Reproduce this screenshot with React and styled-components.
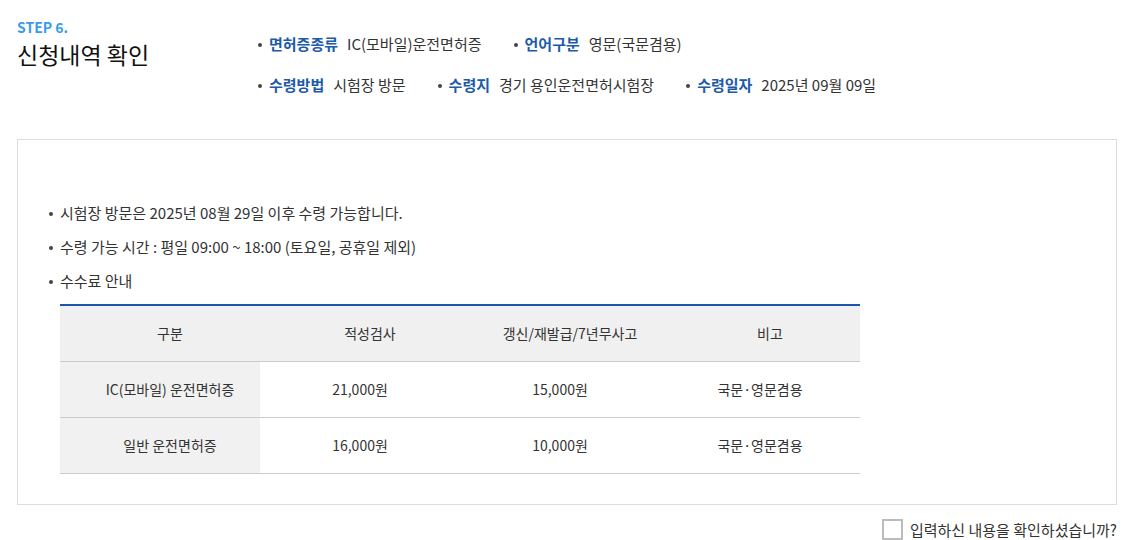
import React from "react";
import styled, { createGlobalStyle } from "styled-components";

const GlobalStyle = createGlobalStyle`
	html, body {
		margin: 0;
		padding: 0;
		background: #fff;
	}
	body {
		font-family: "Noto Sans CJK KR", "Noto Sans", sans-serif;
		color: #333;
	}
	* {
		box-sizing: border-box;
	}
`;

const summary = [
	[
		{ label: "면허증종류", value: "IC(모바일)운전면허증" },
		{ label: "언어구분", value: "영문(국문겸용)" },
	],
	[
		{ label: "수령방법", value: "시험장 방문" },
		{ label: "수령지", value: "경기 용인운전면허시험장" },
		{ label: "수령일자", value: "2025년 09월 09일" },
	],
];

const notices = [
	"시험장 방문은 2025년 08월 29일 이후 수령 가능합니다.",
	"수령 가능 시간 : 평일 09:00 ~ 18:00 (토요일, 공휴일 제외)",
	"수수료 안내",
];

const fees = [
	["IC(모바일) 운전면허증", "21,000원", "15,000원", "국문·영문겸용"],
	["일반 운전면허증", "16,000원", "10,000원", "국문·영문겸용"],
];

const App = () => {
	return (
		<>
			<GlobalStyle />
			<Page>
				<Header>
					<TitleBlock>
						<Step>STEP 6.</Step>
						<Title>신청내역 확인</Title>
					</TitleBlock>
					<Summary>
						{summary.map((row, i) => (
							<SummaryRow key={i}>
								{row.map(item => (
									<SummaryItem key={item.label}>
										<Label>{item.label}</Label>
										<Value>{item.value}</Value>
									</SummaryItem>
								))}
							</SummaryRow>
						))}
					</Summary>
				</Header>

				<Box>
					<NoticeList>
						{notices.map(text => (
							<Notice key={text}>{text}</Notice>
						))}
					</NoticeList>
					<FeeTable>
						<thead>
							<tr>
								<Th>구분</Th>
								<Th>적성검사</Th>
								<Th>갱신/재발급/7년무사고</Th>
								<Th>비고</Th>
							</tr>
						</thead>
						<tbody>
							{fees.map(row => (
								<tr key={row[0]}>
									<RowHead>{row[0]}</RowHead>
									<Td>{row[1]}</Td>
									<Td>{row[2]}</Td>
									<Td>{row[3]}</Td>
								</tr>
							))}
						</tbody>
					</FeeTable>
				</Box>

				<Confirm>
					<CheckBox type='checkbox' id='confirm' />
					<ConfirmLabel htmlFor='confirm'>입력하신 내용을 확인하셨습니까?</ConfirmLabel>
				</Confirm>
			</Page>
		</>
	);
};

export default App;

const Page = styled.div`
	width: 1122px;
	padding: 16px 5px 0 17px;
`;

const Header = styled.div`
	display: flex;
	height: 123px;
`;

const TitleBlock = styled.div`
	width: 241px;
`;

const Step = styled.div`
	font-size: 14px;
	font-weight: 700;
	color: #3a9be9;
	line-height: 22px;
`;

const Title = styled.h2`
	margin: 0;
	font-size: 23px;
	font-weight: 400;
	color: #111;
	line-height: 32px;
`;

const Summary = styled.div`
	display: flex;
	flex-direction: column;
	gap: 19px;
	padding-top: 17px;
`;

const SummaryRow = styled.ul`
	display: flex;
	gap: 32px;
	margin: 0;
	padding: 0;
	list-style: none;
`;

const SummaryItem = styled.li`
	display: flex;
	align-items: center;
	font-size: 15px;
	line-height: 22px;

	&::before {
		content: "";
		width: 4px;
		height: 4px;
		border-radius: 50%;
		background: #444;
		margin: 2px 7px 0 0;
	}
`;

const Label = styled.span`
	font-weight: 700;
	color: #1d5aa8;
	margin-right: 9px;
`;

const Value = styled.span`
	color: #333;
`;

const Box = styled.div`
	border: 1px solid #ddd;
	padding: 62px 0 30px 42px;
`;

const NoticeList = styled.ul`
	margin: 0;
	padding: 0;
	list-style: none;
`;

const Notice = styled.li`
	position: relative;
	font-size: 15px;
	line-height: 22px;
	color: #333;
	margin-bottom: 12px;

	&::before {
		content: "";
		position: absolute;
		left: -11px;
		top: 10px;
		width: 4px;
		height: 4px;
		border-radius: 50%;
		background: #444;
	}

	&:last-child {
		margin-bottom: 12px;
	}
`;

const FeeTable = styled.table`
	width: 800px;
	border-collapse: collapse;
	table-layout: fixed;
	border-top: 2px solid #1a56ad;
	font-size: 14px;
	color: #333;

	th, td {
		height: 56px;
		border-bottom: 1px solid #ccc;
		text-align: center;
		font-weight: 400;
	}
`;

const Th = styled.th`
	background: #f0f0f0;
	padding: 0 0 0 20px;
`;

const RowHead = styled.td`
	background: #f1f1f1;
	padding: 0 0 0 20px;
`;

const Td = styled.td`
	padding: 0;
`;

const Confirm = styled.div`
	display: flex;
	justify-content: flex-end;
	align-items: center;
	gap: 7px;
	margin-top: 14px;
`;

const CheckBox = styled.input`
	appearance: none;
	margin: 0;
	width: 21px;
	height: 21px;
	border: 2px solid #bbb;
	background: #fff;
`;

const ConfirmLabel = styled.label`
	font-size: 15px;
	line-height: 22px;
	color: #333;
`;
